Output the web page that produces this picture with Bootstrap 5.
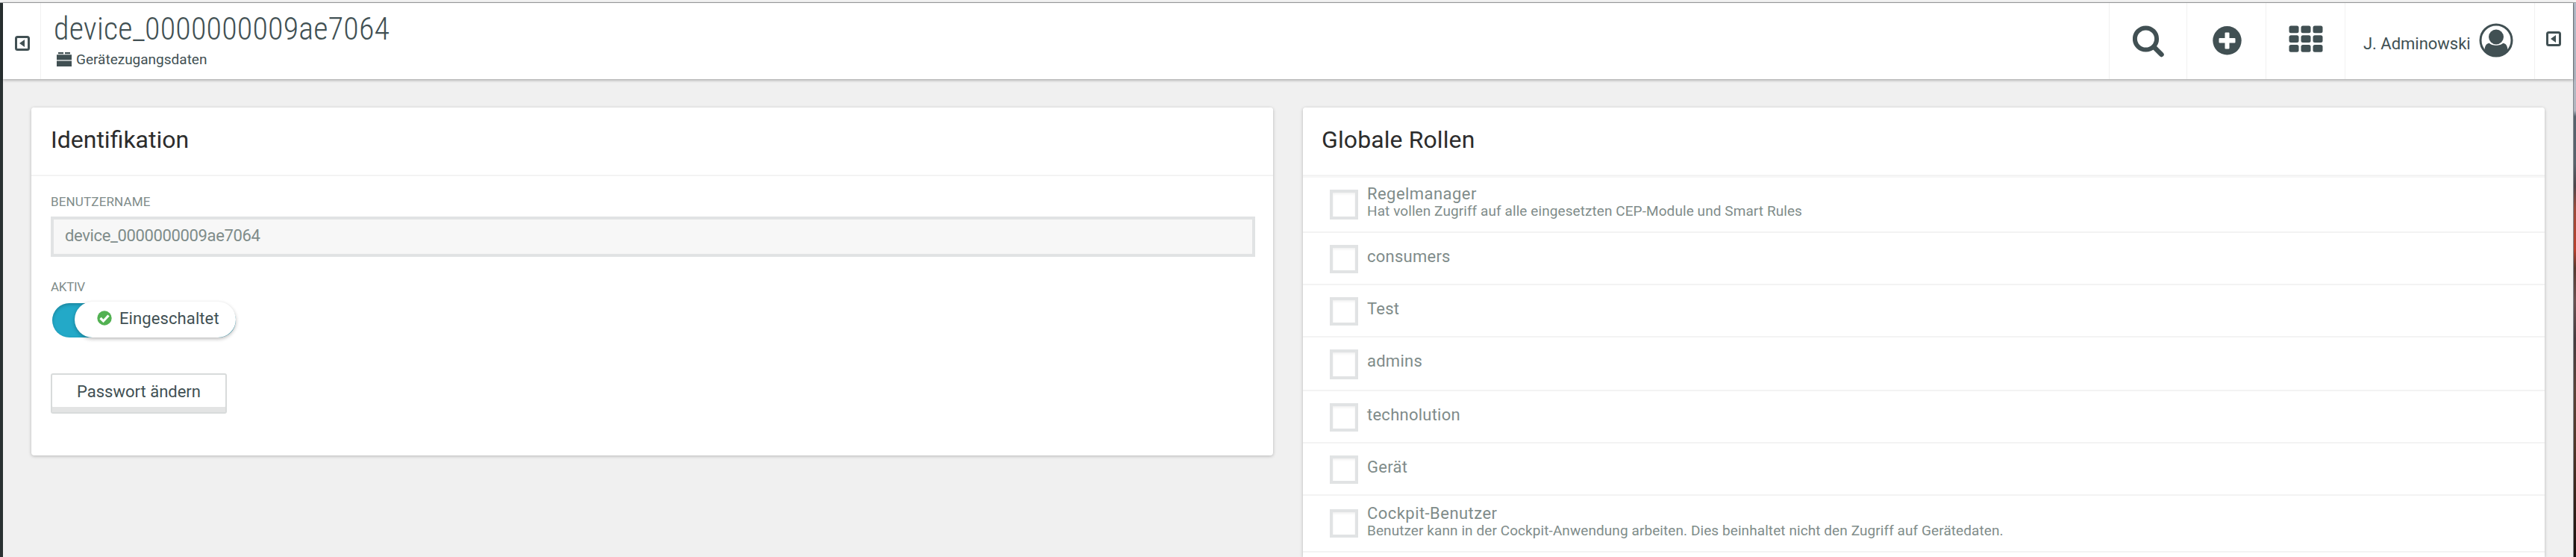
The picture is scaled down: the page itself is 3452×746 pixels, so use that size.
<!DOCTYPE html>
<html lang="de">
<head>
<meta charset="utf-8">
<title>Gerätezugangsdaten</title>
<link href="https://cdn.jsdelivr.net/npm/bootstrap@5.3.0/dist/css/bootstrap.min.css" rel="stylesheet">
<style>
  :root { --ink: #415053; --muted-ink: #7f8c8a; --rule: #f3f3f3; --edge: #e1e3e4; }
  html, body { height: 746px; overflow: hidden; }
  body { font-family: Roboto, "Liberation Sans", sans-serif; font-size: 22px; line-height: 24px; color: var(--ink); background: #f0f0f0; }
  svg { display: block; flex: none; fill: currentColor; }
  .window-edge { height: 4px; background: #f3f3f3; border-bottom: 1px solid #a3a5a6; }
  .shell { height: 742px; }
  .nav-rail { width: 4px; background: #293132; }
  .desktop-edge { width: 4px; border-left: 1px solid #84898e; background: linear-gradient(#b6bfce 0, #b1b5bf 144px, #56626c 152px, #59626b 215px, #4c4549 245px, #9a4a3a 275px, #b8402d 330px, #55392f 355px, #6a5150 400px, #453b3e 450px, #5a4237 520px, #503629 590px, #3b261c 650px, #17100d 742px); }
  .topbar { height: 102px; background: #fff; box-shadow: 0 1px 4px rgba(0,0,0,.38); position: relative; }
  .drawer-left { width: 51px; border-right: 1px solid #f1f1f1; padding: 44px 0 0 16px; }
  .page-title { font-family: "Roboto Condensed", Roboto, sans-serif; font-weight: 300; font-size: 42px; line-height: 42px; letter-spacing: .2px; margin: 0 0 8px; padding-left: 1px; }
  .titles { padding: 14px 0 0 16px; }
  .crumb { font-size: 19px; line-height: 24px; }
  .crumb svg { margin: 2px 6px 0 5px; }
  .tool { border-left: 1px solid #f1f1f1; padding: 0; }
  .t-search { width: 104px; padding: 30px 0 0 31px; }
  .t-add { width: 106px; padding: 31px 0 0 34px; }
  .t-apps { width: 106px; padding: 30px 0 0 30px; }
  .t-user { width: 254px; padding: 27px 0 0 24px; }
  .t-user span { width: 155px; padding-top: 16px; letter-spacing: -.02px; }
  .t-drawer { width: 52px; padding: 38px 0 0 15px; }
  .content { padding: 38px 38px 0; gap: 40px; }
  .panel { border: 0; border-radius: 4px; box-shadow: 0 1px 4px rgba(0,0,0,.25); width: 1664px; }
  .panel-head { background: #fff; height: 92px; padding: 0 26px; border-bottom: 2px solid var(--rule); line-height: 86px; font-size: 32px; color: #2c2c2c; margin: 0; font-weight: 400; border-radius: 4px 4px 0 0; }
  .roles .panel-head { padding-left: 25px; letter-spacing: .1px; }
  .ident { height: 466px; }
  .ident .card-body { padding: 24px 24px 0 26px; }
  .caption { font-size: 17px; line-height: 20px; color: var(--muted-ink); letter-spacing: .15px; display: block; margin-bottom: 10px; }
  .caption-tight { letter-spacing: -.3px; }
  .user-field { height: 54px; border: 4px solid var(--edge); border-radius: 0; background: #f7f7f7; color: var(--muted-ink); padding: 0 15px; font-size: 22px; line-height: 44px; letter-spacing: -.36px; margin-bottom: 30px; }
  .toggle { width: 246px; height: 46px; margin: 12px 0 48px 2px; border-radius: 23px; background: #23a9c8; box-shadow: inset 0 2px 4px rgba(0,0,0,.22); position: relative; }
  .knob { position: absolute; left: 30px; top: -2px; width: 216px; height: 48px; border-radius: 24px; background: #fff; box-shadow: 0 2px 5px rgba(0,0,0,.28); padding-left: 30px; line-height: 45px; letter-spacing: .1px; }
  .knob svg { margin: 12px 10px 0 0; }
  .btn-pass { width: 236px; height: 54px; padding: 0 0 5px; line-height: 45px; border: 2px solid #d8dbdb; border-radius: 3px; background: #fff; color: var(--ink); font-size: 22px; box-shadow: inset 0 -7px 0 #e3e4e4; }
  .roles { height: 602px; border-bottom-left-radius: 0; border-bottom-right-radius: 0; }
  .roles > .role-list { border-top: 2px solid #f7f7f7; }
  .role-list > .role.role { height: 70px; border: 0; border-bottom: 2px solid var(--rule); border-radius: 0; padding: 16px 0 0 36px; color: var(--muted-ink); gap: 12px; background: none; }
  .role-list > .role.role-72 { height: 72px; }
  .role-list > .role.role-74 { height: 74px; }
  .role-list > .role.role-76 { height: 76px; padding-top: 18px; }
  .tick.form-check-input { width: 38px; height: 38px; margin: 0; border: 4px solid var(--edge); border-radius: 0; background: #fff; box-shadow: inset 0 2px 3px rgba(0,0,0,.06); flex: none; }
  .role-72 .tick.form-check-input, .role-74 .tick.form-check-input { height: 40px; }
  .role-name { display: block; padding-top: 4px; letter-spacing: .25px; }
  .described .role-name { padding: 0; margin-top: -6px; letter-spacing: .45px; }
  .role-note { display: block; font-size: 19px; line-height: 24px; letter-spacing: .08px; margin-top: -1px; }
</style>
</head>
<body>
<div class="window-edge"></div>
<div class="shell d-flex">
  <div class="nav-rail"></div>
  <div class="flex-grow-1">
    <header class="topbar d-flex">
      <div class="drawer-left">
        <svg width="20" height="20" viewBox="0 0 20 20"><rect x="1.5" y="1.5" width="17" height="17" rx="2" fill="none" stroke="currentColor" stroke-width="3"/><path d="M13 5v10L6 10z"/></svg>
      </div>
      <div class="titles me-auto">
        <h1 class="page-title">device_0000000009ae7064</h1>
        <div class="crumb d-flex"><svg width="20" height="20" viewBox="0 0 20 20"><path d="M2 0h7v2.2H2zM11 0h7v2.2h-7zM0 3.2h20v7H0zM0 11.5h20V19H0z"/></svg><span>Gerätezugangsdaten</span></div>
      </div>
      <div class="tool t-search"><svg width="43" height="43" viewBox="0 0 43 43"><g fill="none" stroke="currentColor"><circle cx="17.5" cy="18" r="14.6" stroke-width="6"/><path d="M28.500 29L38.500 39" stroke-width="6.500" stroke-linecap="round"/></g></svg></div>
      <div class="tool t-add"><svg width="39" height="39" viewBox="0 0 39 39"><circle cx="19.5" cy="19.300" r="19.200"/><path d="M17.500 8.500h4q1 0 1 1v6.500h7q1 0 1 1v4.500q0 1-1 1h-7v7q0 1-1 1h-4q-1 0-1-1v-7h-7q-1 0-1-1V17q0-1 1-1h7V9.500q0-1 1-1z" fill="#fff"/></svg></div>
      <div class="tool t-apps"><svg width="46" height="37" viewBox="0 0 46 37"><g id="r"><rect x=".5" y=".5" width="13" height="9.700" rx="2.500"/><rect x="16.500" y=".5" width="13" height="9.700" rx="2.500"/><rect x="32.500" y=".5" width="13" height="9.700" rx="2.500"/></g><use href="#r" y="12.800"/><use href="#r" y="25.600"/></svg></div>
      <div class="tool t-user d-flex"><span>J. Adminowski</span>
        <svg width="46" height="46" viewBox="0 0 46 46"><circle cx="23" cy="23" r="21" fill="none" stroke="currentColor" stroke-width="3"/><circle cx="23" cy="18.500" r="10"/><path d="M7.500 35.500C8 29.500 10.500 27 14 26.700C16.500 30.700 29.500 30.700 32 26.700C35.500 27 38 29.500 38.500 35.500C35 41 30 44.500 23 44.500S11 41 7.500 35.500z"/></svg>
      </div>
      <div class="tool t-drawer"><svg width="20" height="20" viewBox="0 0 20 20"><rect x="1.5" y="1.5" width="17" height="17" rx="2" fill="none" stroke="currentColor" stroke-width="3"/><path d="M13 5v10L6 10z"/></svg></div>
    </header>
    <main class="content d-flex align-items-start">
      <section class="card panel ident">
        <h2 class="panel-head">Identifikation</h2>
        <div class="card-body">
          <span class="caption">BENUTZERNAME</span>
          <div class="form-control user-field">device_0000000009ae7064</div>
          <span class="caption caption-tight">AKTIV</span>
          <div class="toggle"><div class="knob d-flex"><svg width="20" height="20" viewBox="0 0 20 20"><circle cx="10" cy="10" r="9.700" fill="#52b152"/><path d="M4.500 10l4 4 7-7.500" fill="none" stroke="#fff" stroke-width="3.200"/></svg><span>Eingeschaltet</span></div></div>
          <button type="button" class="btn btn-pass">Passwort ändern</button>
        </div>
      </section>
      <section class="card panel roles">
        <h2 class="panel-head">Globale Rollen</h2>
        <div class="list-group list-group-flush role-list">
          <label class="list-group-item role role-74 described d-flex align-items-start"><input type="checkbox" class="form-check-input tick"><span><span class="role-name">Regelmanager</span><span class="role-note">Hat vollen Zugriff auf alle eingesetzten CEP-Module und Smart Rules</span></span></label>
          <label class="list-group-item role d-flex align-items-start"><input type="checkbox" class="form-check-input tick"><span class="role-name">consumers</span></label>
          <label class="list-group-item role d-flex align-items-start"><input type="checkbox" class="form-check-input tick"><span class="role-name">Test</span></label>
          <label class="list-group-item role role-72 d-flex align-items-start"><input type="checkbox" class="form-check-input tick"><span class="role-name">admins</span></label>
          <label class="list-group-item role d-flex align-items-start"><input type="checkbox" class="form-check-input tick"><span class="role-name">technolution</span></label>
          <label class="list-group-item role d-flex align-items-start"><input type="checkbox" class="form-check-input tick"><span class="role-name">Gerät</span></label>
          <label class="list-group-item role role-76 described d-flex align-items-start"><input type="checkbox" class="form-check-input tick"><span><span class="role-name">Cockpit-Benutzer</span><span class="role-note">Benutzer kann in der Cockpit-Anwendung arbeiten. Dies beinhaltet nicht den Zugriff auf Gerätedaten.</span></span></label>
        </div>
      </section>
    </main>
  </div>
  <div class="desktop-edge"></div>
</div>
<script src="https://cdn.jsdelivr.net/npm/bootstrap@5.3.0/dist/js/bootstrap.bundle.min.js"></script>
</body>
</html>
